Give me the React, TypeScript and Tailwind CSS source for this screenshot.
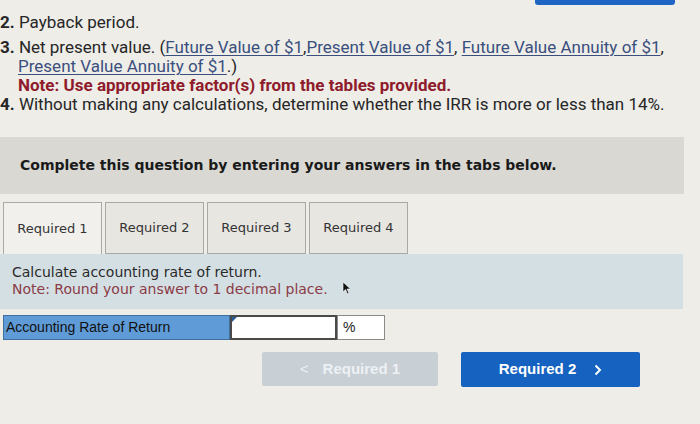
const linkCls = 'text-[#3a4f7e] underline decoration-1 underline-offset-2';

const tabs = ['Required 1', 'Required 2', 'Required 3', 'Required 4'];

export default function App() {
  return (
    <div className="w-[700px] h-[424px] overflow-hidden bg-[#eeede8] relative">
      {/* cut-off button above */}
      <div className="absolute left-[535px] top-0 w-[140px] h-[5px] bg-[#1f66c4] rounded-b-[3px]" />

      <div className="pt-[13px] font-['Roboto',sans-serif] text-[17px] leading-[19px] text-[#262626]">
        <div><span className="font-bold">2.</span> Payback period.</div>
        <div className="mt-[6px]">
          <span className="font-bold">3.</span> Net present value. (
          <span className={linkCls}>Future Value of $1</span>,
          <span className={linkCls}>Present Value of $1</span>,{' '}
          <span className={linkCls}>Future Value Annuity of $1</span>,
        </div>
        <div className="pl-[18px]">
          <span className={linkCls}>Present Value Annuity of $1</span>.)
        </div>
        <div className="pl-[18px] font-bold text-[#8e1b2b]">Note: Use appropriate factor(s) from the tables provided.</div>
        <div><span className="font-bold">4.</span> Without making any calculations, determine whether the IRR is more or less than 14%.</div>
      </div>

      <div className="mt-[23px] w-[684px] h-[57px] bg-[#d9d8d3] flex items-center pl-[20px] font-['DejaVu_Sans',sans-serif] text-[14px] font-bold text-[#1a1a1a]">
        Complete this question by entering your answers in the tabs below.
      </div>

      <div className="mt-[8px] flex gap-[3px] pl-[3px] font-['DejaVu_Sans',sans-serif] text-[13px] text-[#333]">
        {tabs.map((t, i) => (
          <div
            key={t}
            className={`w-[99px] h-[52px] flex items-center justify-center border border-[#a9a9a6] ${
              i === 0 ? 'bg-[#f1f0ec] border-b-0' : 'bg-[#e7e6e1]'
            }`}
          >
            {t}
          </div>
        ))}
      </div>

      <div className="w-[683px] h-[55px] bg-[#d4dfe4] pl-[12px] pt-[10px] font-['DejaVu_Sans',sans-serif] text-[14px] leading-[17px]">
        <div className="text-[#2a2a2a]">Calculate accounting rate of return.</div>
        <div className="text-[#8b3b44] flex items-center">
          Note: Round your answer to 1 decimal place.
          <svg className="ml-[14px] -mt-[4px]" width="10" height="14" viewBox="0 0 10 14">
            <path d="M1 1 L1 11 L3.5 8.5 L5.5 13 L7 12.3 L5 8 L8.5 8 Z" fill="#111" stroke="#fff" strokeWidth="0.6" />
          </svg>
        </div>
      </div>

      <div className="mt-[6px] ml-[3px] flex h-[25px] font-['Liberation_Sans',sans-serif] text-[14px]">
        <div className="w-[227px] bg-[#5f9bd6] border border-[#3e6f9e] flex items-center pl-[2px] text-[#111]">
          Accounting Rate of Return
        </div>
        <div className="w-[107px] bg-white border-2 border-[#4a4a4a] relative">
          <div className="absolute left-0 top-0 w-0 h-0 border-t-[5px] border-r-[5px] border-t-[#2a5c99] border-r-transparent" />
        </div>
        <div className="w-[48px] bg-white border border-[#8a8a8a] flex items-center pl-[5px] text-[#222]">%</div>
      </div>

      <div className="mt-[12px] flex gap-[23px] pl-[262px] font-['Liberation_Sans',sans-serif] font-bold text-[15px]">
        <div className="w-[176px] h-[34px] bg-[#c8cfd5] rounded-[2px] flex items-center justify-center text-[#eef1f4] gap-[14px]">
          <span className="font-normal">&lt;</span>
          <span>Required 1</span>
        </div>
        <div className="w-[179px] h-[35px] bg-[#1662c0] rounded-[2px] flex items-center justify-center text-white gap-[18px]">
          <span>Required 2</span>
          <svg width="8" height="12" viewBox="0 0 8 12">
            <path d="M1.5 1.5 L6 6 L1.5 10.5" fill="none" stroke="#fff" strokeWidth="2" />
          </svg>
        </div>
      </div>
    </div>
  );
}
